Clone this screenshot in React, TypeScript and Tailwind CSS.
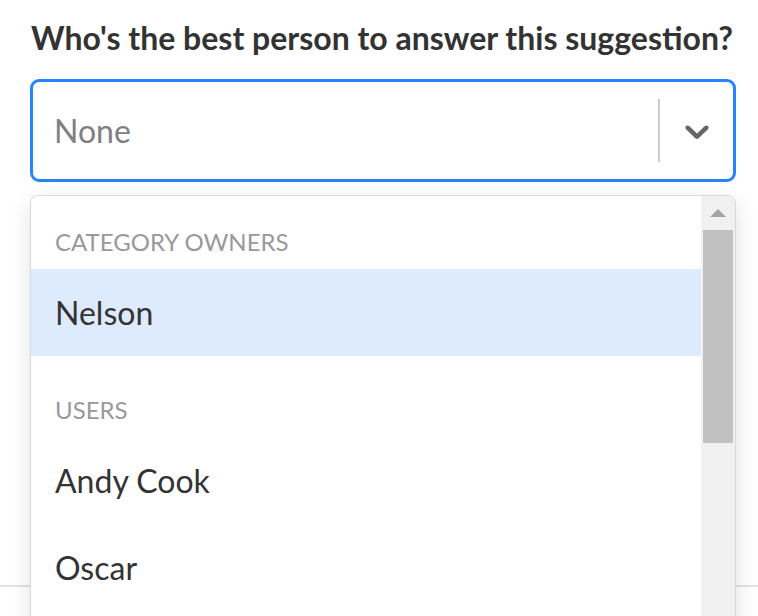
import React from 'react';

function ChevronDown() {
  return (
    <svg viewBox="0 0 20 20" className="w-10 h-10" fill="#666666" aria-hidden="true">
      <path d="M4.516 7.548c0.436-0.446 1.043-0.481 1.576 0l3.908 3.747 3.908-3.747c0.533-0.481 1.141-0.446 1.574 0 0.436 0.445 0.408 1.197 0 1.615-0.406 0.418-4.695 4.502-4.695 4.502-0.217 0.223-0.502 0.335-0.787 0.335s-0.57-0.112-0.789-0.335c0 0-4.287-4.084-4.695-4.502s-0.436-1.17 0-1.615z" />
    </svg>
  );
}

const groups = [
  { label: 'Category owners', options: ['Nelson'] },
  { label: 'Users', options: ['Andy Cook', 'Oscar'] },
];

export default function App() {
  const focused = 'Nelson';

  return (
    <div
      className="h-[616px] w-[758px] overflow-hidden bg-white text-[#333333]"
      style={{ fontFamily: 'Lato, "Open Sans", sans-serif' }}
    >
      <div className="flex flex-col h-full">
        <h2 className="ml-[31px] mt-[19px] text-[32px] font-bold leading-[38px] text-[#333333]">
          Who's the best person to answer this suggestion?
        </h2>

        {/* Select + open menu */}
        <div className="relative ml-[30px] mt-[22px] w-[706px]">
          <div className="flex h-[103px] items-center rounded-[9px] border-[3px] border-[#2684FF] bg-white">
            <div className="flex-1 pl-[21px] text-[32px] leading-[38px] text-[#808080]">None</div>
            <div className="h-[63px] w-[2px] bg-[#cccccc]" />
            <div className="flex w-[73px] justify-center">
              <ChevronDown />
            </div>
          </div>

          <div className="absolute left-0 right-0 top-[116px] z-10 h-[520px] overflow-hidden rounded-t-[8px] border border-[#d9d9d9] bg-white shadow-[0_8px_22px_rgba(0,0,0,0.12)]">
            <div className="flex h-full">
              <div className="flex-1">
                {groups.map((g, gi) => (
                  <div key={g.label} className={gi > 0 ? 'pt-[8px]' : ''}>
                    <div className="pl-[24px] pt-[31px] pb-[13px] text-[24px] uppercase leading-[29px] text-[#999999]">
                      {g.label}
                    </div>
                    {g.options.map(o => (
                      <div
                        key={o}
                        className={`flex h-[87px] items-center pl-[24px] text-[32px] leading-[38px] text-[#333333] ${
                          o === focused ? 'bg-[#DEEBFF]' : ''
                        }`}
                      >
                        {o}
                      </div>
                    ))}
                  </div>
                ))}
              </div>

              {/* scrollbar */}
              <div className="flex w-[34px] flex-col bg-[#f1f1f1]">
                <div className="flex h-[34px] items-center justify-center">
                  <svg viewBox="0 0 16 8" className="h-[8px] w-[16px]" fill="#a3a3a3">
                    <path d="M0 8L8 0L16 8Z" />
                  </svg>
                </div>
                <div className="mx-[2px] h-[213px] bg-[#c1c1c1]" />
              </div>
            </div>
          </div>
        </div>

        <div className="mt-auto mb-[29px] h-[2px] bg-[#e3e3e3]" />
      </div>
    </div>
  );
}
